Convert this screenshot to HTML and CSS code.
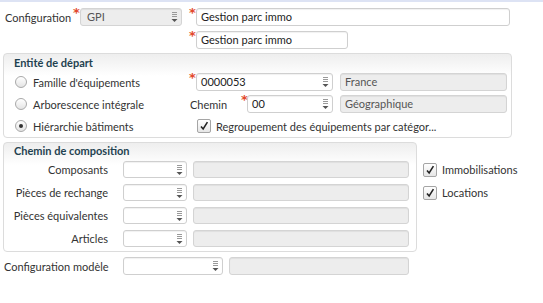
FILE: index.html
```html
<!DOCTYPE html>
<html lang="fr">
<head>
    <meta charset="UTF-8">
    <title>Configuration GPI</title>
    <link rel="stylesheet" href="styles.css">
</head>
<body>
    <div class="page">
        <div class="row row-top">
            <span class="lbl-config">Configuration</span>
            <span class="star">*</span>
            <div class="field grey select w-gpi">GPI
                <svg class="sel" viewBox="0 0 7 12"><path d="M1 1.5h5M1 3.5h5M1 5.5h5" stroke="#9a9a9a" stroke-width="1"/><path d="M0.5 8h6l-3 3z" fill="#555"/></svg>
            </div>
            <span class="star star-gap">*</span>
            <div class="field w-long">Gestion parc immo</div>
        </div>
        <div class="row row-second">
            <span class="star">*</span>
            <div class="field w-short">Gestion parc immo</div>
        </div>

        <div class="box box-entite">
            <div class="box-title">Entité de départ</div>
            <div class="erow">
                <div class="left"><span class="radio"></span>Famille d'équipements</div>
                <span class="star star-cell">*</span>
                <div class="field select w-code">0000053
                    <svg class="sel" viewBox="0 0 7 12"><path d="M1 1.5h5M1 3.5h5M1 5.5h5" stroke="#9a9a9a" stroke-width="1"/><path d="M0.5 8h6l-3 3z" fill="#555"/></svg>
                </div>
                <div class="field grey w-desc">France</div>
            </div>
            <div class="erow">
                <div class="left"><span class="radio"></span>Arborescence intégrale</div>
                <span class="lbl-chemin">Chemin</span>
                <span class="star star-small">*</span>
                <div class="field select w-chemin">00
                    <svg class="sel" viewBox="0 0 7 12"><path d="M1 1.5h5M1 3.5h5M1 5.5h5" stroke="#9a9a9a" stroke-width="1"/><path d="M0.5 8h6l-3 3z" fill="#555"/></svg>
                </div>
                <div class="field grey w-desc">Géographique</div>
            </div>
            <div class="erow">
                <div class="left"><span class="radio checked"></span>Hiérarchie bâtiments</div>
                <span class="check regroup">
                    <svg viewBox="0 0 14 14"><path d="M3.5 7.5l2.5 3 5-8" fill="none" stroke="#222" stroke-width="1.8"/></svg>
                </span>
                <span class="nowrap">Regroupement des équipements par catégor...</span>
            </div>
        </div>

        <div class="compo">
            <div class="box box-chemin">
                <div class="box-title">Chemin de composition</div>
                <div class="crow">
                    <span class="clabel">Composants</span>
                    <div class="field select w-small"><svg class="sel" viewBox="0 0 7 12"><path d="M1 1.5h5M1 3.5h5M1 5.5h5" stroke="#9a9a9a" stroke-width="1"/><path d="M0.5 8h6l-3 3z" fill="#555"/></svg></div>
                    <div class="field grey w-wide"></div>
                </div>
                <div class="crow">
                    <span class="clabel">Pièces de rechange</span>
                    <div class="field select w-small"><svg class="sel" viewBox="0 0 7 12"><path d="M1 1.5h5M1 3.5h5M1 5.5h5" stroke="#9a9a9a" stroke-width="1"/><path d="M0.5 8h6l-3 3z" fill="#555"/></svg></div>
                    <div class="field grey w-wide"></div>
                </div>
                <div class="crow">
                    <span class="clabel">Pièces équivalentes</span>
                    <div class="field select w-small"><svg class="sel" viewBox="0 0 7 12"><path d="M1 1.5h5M1 3.5h5M1 5.5h5" stroke="#9a9a9a" stroke-width="1"/><path d="M0.5 8h6l-3 3z" fill="#555"/></svg></div>
                    <div class="field grey w-wide"></div>
                </div>
                <div class="crow">
                    <span class="clabel">Articles</span>
                    <div class="field select w-small"><svg class="sel" viewBox="0 0 7 12"><path d="M1 1.5h5M1 3.5h5M1 5.5h5" stroke="#9a9a9a" stroke-width="1"/><path d="M0.5 8h6l-3 3z" fill="#555"/></svg></div>
                    <div class="field grey w-wide"></div>
                </div>
            </div>
            <div class="side">
                <div class="srow">
                    <span class="check"><svg viewBox="0 0 14 14"><path d="M3.5 7.5l2.5 3 5-8" fill="none" stroke="#222" stroke-width="1.8"/></svg></span>
                    Immobilisations
                </div>
                <div class="srow">
                    <span class="check"><svg viewBox="0 0 14 14"><path d="M3.5 7.5l2.5 3 5-8" fill="none" stroke="#222" stroke-width="1.8"/></svg></span>
                    Locations
                </div>
            </div>
        </div>

        <div class="row row-modele">
            <span class="clabel">Configuration modèle</span>
            <div class="field select w-modele"><svg class="sel" viewBox="0 0 7 12"><path d="M1 1.5h5M1 3.5h5M1 5.5h5" stroke="#9a9a9a" stroke-width="1"/><path d="M0.5 8h6l-3 3z" fill="#555"/></svg></div>
            <div class="field grey w-modele-desc"></div>
        </div>
    </div>
</body>
</html>
```

FILE: styles.css
```css
body {
    margin: 0;
    font-family: 'Lato', 'Open Sans', sans-serif;
    font-size: 11px;
    color: #333;
    background-color: #fff;
    border-top: 2px solid #dde3f4;
}
.page {
    padding-top: 6px;
}
.nowrap {
    white-space: nowrap;
}
.row {
    display: flex;
    align-items: center;
    height: 18px;
}
.row > *, .erow > *, .crow > * {
    flex-shrink: 0;
}
.row-top {
    padding-left: 5px;
}
.lbl-config {
    width: 68px;
}
.star {
    box-sizing: border-box;
    color: #e2492c;
    font-family: 'DejaVu Sans', sans-serif;
    font-size: 13px;
    font-weight: bold;
    width: 7px;
    align-self: flex-start;
    line-height: 12px;
    margin-top: -1px;
}
.star-gap {
    margin-left: 7px;
}
.row-second {
    margin-top: 5px;
    padding-left: 189px;
}
.field {
    position: relative;
    box-sizing: border-box;
    height: 18px;
    line-height: 16px;
    padding: 0 4px;
    border: 1px solid #cfcfcf;
    border-radius: 3px;
    background-color: #fff;
    color: #222;
    box-shadow: inset 0 1px 1px rgba(0, 0, 0, 0.06);
    white-space: nowrap;
    overflow: hidden;
}
.field.grey {
    background-color: #ededed;
    border-color: #d4d4d4;
    color: #555;
}
.sel {
    position: absolute;
    right: 3px;
    top: 2px;
    width: 7px;
    height: 12px;
}
.w-gpi { width: 102px; padding-left: 6px; }
.w-long { width: 314px; }
.w-short { width: 152px; }
.box {
    box-sizing: border-box;
    margin-left: 3px;
    border: 1px solid #dcdcdc;
    border-radius: 4px;
    background: linear-gradient(#eeeeee, #ffffff 22px);
}
.box-title {
    height: 17px;
    line-height: 17px;
    padding-left: 10px;
    font-weight: bold;
    color: #1f4250;
}
.box-entite {
    margin-top: 4px;
    width: 509px;
}
.erow {
    display: flex;
    align-items: center;
    height: 22px;
}
.left {
    display: flex;
    align-items: center;
    width: 171px;
    padding-left: 11px;
}
.radio {
    box-sizing: border-box;
    width: 12px;
    height: 12px;
    margin-right: 6px;
    border: 1px solid #a9a9a9;
    border-radius: 50%;
    background: linear-gradient(#ffffff, #e4e4e4);
    display: flex;
    align-items: center;
    justify-content: center;
}
.radio.checked::after {
    content: "";
    width: 4px;
    height: 4px;
    border-radius: 50%;
    background-color: #333;
}
.star-cell {
    width: 10px;
    padding-left: 3px;
    margin-top: 1px;
}
.star-small {
    width: 5px;
    margin-left: -1px;
    margin-top: 1px;
}
.w-code { width: 137px; }
.w-desc { width: 167px; margin-left: 7px; }
.lbl-chemin {
    box-sizing: border-box;
    width: 56px;
    padding-left: 4px;
}
.w-chemin { width: 86px; margin-left: 1px; }
.check {
    box-sizing: border-box;
    width: 14px;
    height: 14px;
    margin-right: 5px;
    border: 1px solid #a5a5a5;
    border-radius: 2px;
    background: linear-gradient(#ffffff, #e6e6e6);
    display: inline-flex;
}
.check svg {
    width: 12px;
    height: 12px;
}
.regroup {
    margin-left: 11px;
    margin-top: -1px;
}
.compo {
    display: flex;
    margin-top: 4px;
}
.box-chemin {
    width: 414px;
    padding-bottom: 1px;
}
.box-chemin .box-title {
    height: 15px;
    line-height: 15px;
}
.crow {
    display: flex;
    align-items: center;
    height: 23px;
}
.clabel {
    width: 104px;
    text-align: right;
    margin-right: 15px;
    white-space: nowrap;
}
.w-small { width: 64px; height: 17px; }
.w-wide { width: 216px; margin-left: 6px; height: 17px; }
.side {
    margin-left: 6px;
    padding-top: 16px;
}
.srow {
    display: flex;
    align-items: center;
    height: 23px;
}
.row-modele {
    margin-top: 5px;
    padding-left: 4px;
}
.w-modele { width: 100px; }
.w-modele-desc { width: 180px; margin-left: 6px; }
```
